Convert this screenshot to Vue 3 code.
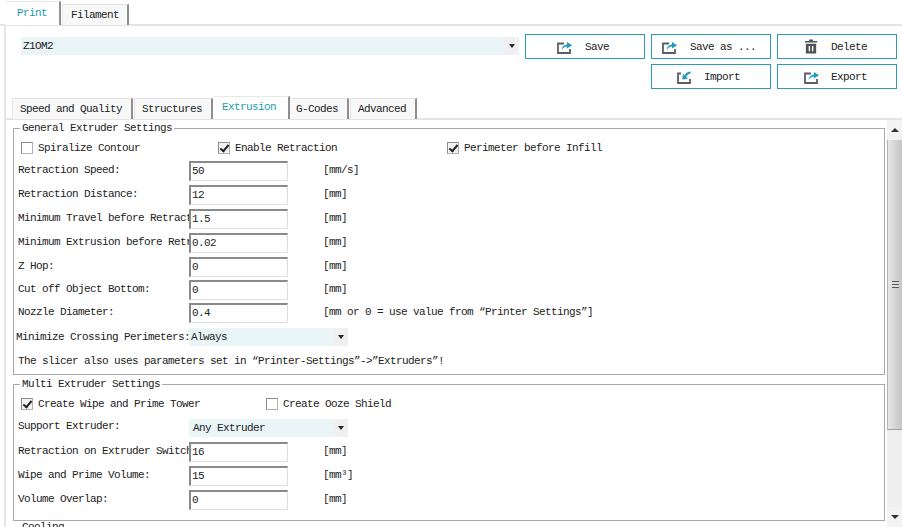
<template>
  <div class="app">
    <div class="main-tabs">
      <div
        v-for="tab in mainTabs"
        :key="tab"
        class="tab"
        :class="{ active: tab === 'Print' }"
      >
        {{ tab }}
      </div>
    </div>

    <div class="page">
      <div class="toolbar">
        <div class="combo profile">
          <span class="combo-text">Z1OM2</span>
          <span class="combo-arrow"></span>
        </div>
        <button v-for="btn in buttons" :key="btn.text" class="tool-btn" :class="btn.cls">
          <svg v-if="btn.icon === 'share'" class="ico" viewBox="0 0 16 14">
            <path d="M8 3.5H2V13H14V9" fill="none" stroke="#5a5f66" stroke-width="1.8" />
            <path d="M5.5 10C6 7 8 5 11 4.6V2L16 5.2 11 8.4V6.6C9 6.6 7 7.8 5.5 10Z" fill="#1f9cb8" />
          </svg>
          <svg v-else-if="btn.icon === 'import'" class="ico" viewBox="0 0 16 14">
            <path d="M5 3.5H2V13H14V9" fill="none" stroke="#5a5f66" stroke-width="1.8" />
            <path d="M14.5 1.5C11 1.8 9.4 3.4 8.8 5.4L7 3.8 6.2 9.6 12 8.8 10.3 7.2C10.8 5.4 12.4 3.8 14.5 3.4Z" fill="#1f9cb8" />
          </svg>
          <svg v-else class="ico trash" viewBox="0 0 14 16">
            <path d="M5 0.5H9V2H13.5V3.6H0.5V2H5Z" fill="#4d5359" />
            <path fill-rule="evenodd" d="M1.5 5H12.5V15.5H1.5ZM4.5 7.5V13H6V7.5ZM8 7.5V13H9.5V7.5Z" fill="#4d5359" />
          </svg>
          <span class="btn-text">{{ btn.text }}</span>
        </button>
      </div>

      <div class="sub-tabs">
        <div
          v-for="tab in subTabs"
          :key="tab"
          class="tab sub"
          :class="{ active: tab === 'Extrusion' }"
        >
          {{ tab }}
        </div>
      </div>

      <div class="body">
        <div class="content">
          <fieldset class="group general">
            <legend>General Extruder Settings</legend>
            <div class="checks">
              <label class="check c1"><span class="box"></span>Spiralize Contour</label>
              <label class="check c2"><span class="box on"></span>Enable Retraction</label>
              <label class="check"><span class="box on"></span>Perimeter before Infill</label>
            </div>
            <div v-for="row in generalRows" :key="row.label" class="row" :style="{ height: row.h + 'px' }">
              <span class="label">{{ row.label }}</span>
              <span class="input">{{ row.value }}</span>
              <span class="unit">{{ row.unit }}</span>
            </div>
            <div class="row combo-row">
              <span class="label wide">Minimize Crossing Perimeters:</span>
              <div class="combo small">
                <span class="combo-text">Always</span>
                <span class="combo-arrow"></span>
              </div>
            </div>
            <div class="note">The slicer also uses parameters set in “Printer-Settings”-&gt;”Extruders”!</div>
          </fieldset>

          <fieldset class="group multi">
            <legend>Multi Extruder Settings</legend>
            <div class="checks">
              <label class="check c3"><span class="box on"></span>Create Wipe and Prime Tower</label>
              <label class="check"><span class="box"></span>Create Ooze Shield</label>
            </div>
            <div class="row combo-row support">
              <span class="label">Support Extruder:</span>
              <div class="combo small">
                <span class="combo-text pad">Any Extruder</span>
                <span class="combo-arrow"></span>
              </div>
            </div>
            <div v-for="row in multiRows" :key="row.label" class="row" :style="{ height: row.h + 'px' }">
              <span class="label">{{ row.label }}</span>
              <span class="input">{{ row.value }}</span>
              <span class="unit">{{ row.unit }}</span>
            </div>
          </fieldset>

          <fieldset class="group cooling">
            <legend>Cooling</legend>
          </fieldset>
        </div>

        <div class="scrollbar">
          <div class="sb-btn"><span class="up"></span></div>
          <div class="thumb">
            <span class="grip"></span>
          </div>
          <div class="track"></div>
          <div class="sb-btn"><span class="down"></span></div>
        </div>
      </div>
    </div>
  </div>
</template>

<script setup>
const mainTabs = ['Print', 'Filament']
const subTabs = ['Speed and Quality', 'Structures', 'Extrusion', 'G-Codes', 'Advanced']

const buttons = [
  { text: 'Save', icon: 'share', cls: 'save' },
  { text: 'Save as ...', icon: 'share', cls: 'saveas' },
  { text: 'Delete', icon: 'trash', cls: 'del' },
  { text: 'Import', icon: 'import', cls: 'imp' },
  { text: 'Export', icon: 'share', cls: 'exp' }
]

const generalRows = [
  { label: 'Retraction Speed:', value: '50', unit: '[mm/s]', h: 24 },
  { label: 'Retraction Distance:', value: '12', unit: '[mm]', h: 24 },
  { label: 'Minimum Travel before Retraction:', value: '1.5', unit: '[mm]', h: 24 },
  { label: 'Minimum Extrusion before Retraction:', value: '0.02', unit: '[mm]', h: 24 },
  { label: 'Z Hop:', value: '0', unit: '[mm]', h: 23 },
  { label: 'Cut off Object Bottom:', value: '0', unit: '[mm]', h: 23 },
  { label: 'Nozzle Diameter:', value: '0.4', unit: '[mm or 0 = use value from “Printer Settings”]', h: 24 }
]

const multiRows = [
  { label: 'Retraction on Extruder Switch:', value: '16', unit: '[mm]', h: 24 },
  { label: 'Wipe and Prime Volume:', value: '15', unit: '[mm³]', h: 24 },
  { label: 'Volume Overlap:', value: '0', unit: '[mm]', h: 24 }
]
</script>

<style>
html,
body {
  margin: 0;
  background: #fff;
}
</style>

<style scoped>
.app {
  width: 902px;
  height: 527px;
  overflow: hidden;
  display: flex;
  flex-direction: column;
  background: #fff;
  font-family: "Liberation Mono", "DejaVu Sans Mono", monospace;
  font-size: 11px;
  letter-spacing: -0.6px;
  color: #222;
}

.main-tabs {
  height: 26px;
  flex: none;
  box-sizing: border-box;
  display: flex;
  align-items: flex-end;
  padding-left: 5px;
  border-bottom: 2px solid #e4e4e4;
}

.tab {
  box-sizing: border-box;
  height: 21px;
  margin-bottom: -1px;
  padding: 0 8px;
  display: flex;
  align-items: center;
  background: #f8f8f8;
  border-top: 1px solid #e2e2e2;
  border-left: 1px solid #e8e8e8;
  border-right: 2px solid #8e8e8e;
  white-space: nowrap;
}

.tab.active {
  height: 24px;
  width: 56px;
  padding: 0 0 2px 12px;
  background: #fff;
  color: #1b9cb0;
  border-top: 1px solid #e8e8e8;
  border-left: none;
  border-bottom: none;
  margin-right: 1px;
}

.page {
  flex: 1;
  min-height: 0;
  display: flex;
  flex-direction: column;
  margin-left: 4px;
  border-left: 2px solid #e6e6e6;
}

.toolbar {
  height: 72px;
  flex: none;
  box-sizing: border-box;
  padding: 8px 5px 0 15px;
  display: grid;
  grid-template-columns: 498px 120px 120px 120px;
  grid-template-rows: 25px 25px;
  column-gap: 6px;
  row-gap: 5px;
}

.combo {
  display: flex;
  align-items: center;
  justify-content: space-between;
  background: #eaf5f8;
}

.profile {
  height: 18px;
  margin-top: 3px;
}

.combo-text {
  padding-left: 2px;
}

.combo-text.pad {
  padding-left: 4px;
}

.combo-arrow {
  width: 15px;
  align-self: stretch;
  display: flex;
  align-items: center;
  justify-content: center;
  background: #f0f0f0;
}

.combo-arrow::after {
  content: "";
  border-left: 3.5px solid transparent;
  border-right: 3.5px solid transparent;
  border-top: 4px solid #222;
}

.tool-btn {
  box-sizing: border-box;
  padding: 0 0 0 30px;
  display: flex;
  align-items: center;
  background: #fff;
  border: 1px solid #2a9ab5;
  font: inherit;
  letter-spacing: inherit;
  color: #222;
  white-space: pre;
}

.tool-btn.imp {
  grid-column: 3;
  padding-left: 24px;
}

.tool-btn.exp {
  grid-column: 4;
  padding-left: 25px;
}

.tool-btn.saveas {
  padding-left: 9px;
}

.tool-btn.del {
  padding-left: 25px;
}

.ico {
  width: 16px;
  height: 14px;
  flex: none;
  margin-right: 12px;
}

.save .ico {
  margin-right: 13px;
}

.saveas .ico {
  margin-right: 13px;
}

.ico.trash {
  height: 15px;
  margin-right: 12px;
}

.sub-tabs {
  height: 22px;
  flex: none;
  box-sizing: border-box;
  display: flex;
  align-items: flex-end;
  padding-left: 6px;
  border-bottom: 2px solid #e4e4e4;
}

.tab.sub {
  padding: 0 9px 0 7px;
  margin-right: 1px;
}

.tab.sub.active {
  position: relative;
  z-index: 1;
  width: 76px;
  height: 23px;
  padding: 0 0 2px 8px;
  margin-right: -2px;
}

.body {
  flex: 1;
  min-height: 0;
  display: flex;
}

.content {
  flex: 1;
  min-width: 0;
  overflow: hidden;
  padding: 0 2px 0 7px;
}

.group {
  margin: 0 0 3px;
  padding: 0 4px 0 3px;
  border: 1px solid #a8a8a8;
  min-inline-size: 0;
}

.group legend {
  padding: 0 2px;
  margin-left: 3px;
  line-height: 12px;
}

.general {
  height: 253px;
  box-sizing: border-box;
  margin-top: 2px;
}

.multi {
  height: 143px;
  box-sizing: border-box;
  margin-bottom: 0;
}

.cooling {
  height: 40px;
  box-sizing: border-box;
}

.checks {
  display: flex;
  box-sizing: border-box;
  height: 25px;
  align-items: center;
  padding: 3px 0 0 4px;
}

.check {
  display: flex;
  align-items: center;
  white-space: nowrap;
}

.c1 {
  width: 197px;
}

.c2 {
  width: 229px;
}

.c3 {
  width: 245px;
}

.box {
  box-sizing: border-box;
  position: relative;
  width: 12px;
  height: 12px;
  margin-right: 5px;
  background: #fff;
  border: 1px solid #b0b0b0;
  border-top-color: #8c8c8c;
  border-left-color: #8c8c8c;
}

.box.on {
  background: #f3f3f3;
}

.box.on::after {
  content: "";
  position: absolute;
  left: 3px;
  top: 0;
  width: 3px;
  height: 7px;
  border-right: 2px solid #222;
  border-bottom: 2px solid #222;
  transform: rotate(40deg);
}

.row {
  display: flex;
  align-items: center;
}

.label {
  width: 172px;
  flex: none;
  margin-top: -2px;
  overflow: hidden;
  white-space: nowrap;
  padding-left: 1px;
  box-sizing: border-box;
}

.label.wide {
  margin-left: -2px;
  margin-top: 0;
  width: 174px;
  padding-left: 1px;
}

.input {
  box-sizing: border-box;
  width: 99px;
  height: 20px;
  flex: none;
  padding: 0 0 0 1px;
  line-height: 17px;
  background: #fff;
  border: 1px solid #dedede;
  border-top: 2px solid #8a8a8a;
  border-left: 2px solid #8a8a8a;
}

.unit {
  margin-left: 35px;
  margin-top: -2px;
  white-space: nowrap;
}

.combo.small {
  box-sizing: border-box;
  width: 159px;
  height: 18px;
}

.combo-row {
  height: 24px;
}

.combo-row.support {
  height: 25px;
}

.support .label {
  margin-top: -3px;
}

.note {
  margin-top: 6px;
  padding-left: 1px;
}

.scrollbar {
  width: 15px;
  flex: none;
  display: flex;
  flex-direction: column;
  background: #efefef;
}

.sb-btn {
  height: 20px;
  flex: none;
  display: flex;
  align-items: center;
  justify-content: center;
  background: #f3f3f3;
}

.up {
  border-left: 4px solid transparent;
  border-right: 4px solid transparent;
  border-bottom: 4px solid #333;
}

.down {
  border-left: 4px solid transparent;
  border-right: 4px solid transparent;
  border-top: 4px solid #333;
}

.thumb {
  height: 290px;
  flex: none;
  box-sizing: border-box;
  display: flex;
  align-items: center;
  justify-content: center;
  background: linear-gradient(to right, #e6e6e6, #d2d2d2 55%, #c6c6c6);
  border-bottom: 1px solid #a0a0a0;
  border-left: 1px solid #b4b4b4;
}

.grip {
  width: 7px;
  height: 7px;
  background: repeating-linear-gradient(to bottom, #555 0 1px, #ddd 1px 3px);
}

.track {
  flex: 1;
}
</style>
